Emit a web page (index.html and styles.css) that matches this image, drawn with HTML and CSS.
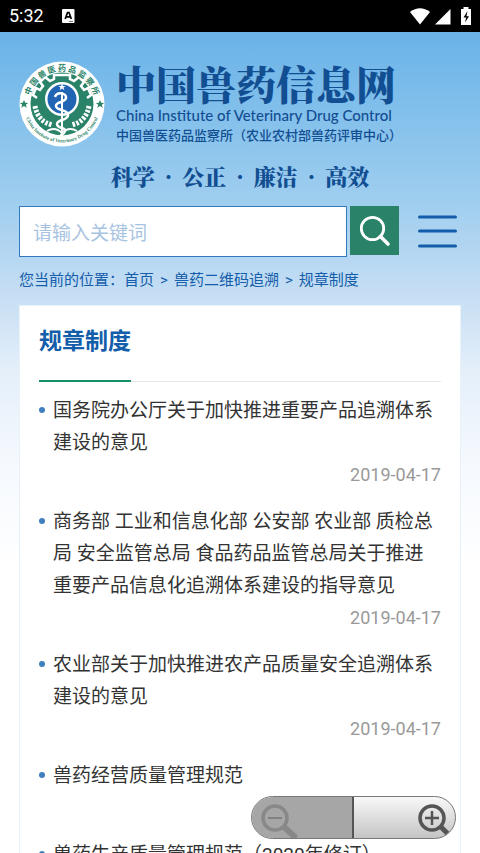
FILE: index.html
```html
<!DOCTYPE html>
<html lang="zh-CN">
<head>
<meta charset="utf-8">
<meta name="viewport" content="width=device-width, initial-scale=1">
<title>规章制度 - 中国兽药信息网</title>
<link rel="stylesheet" href="styles.css">
</head>
<body>
<div class="screen">
  <div class="status">
    <span class="clock">5:32</span>
    <svg class="status-app" width="13" height="14" viewBox="0 0 13 14" aria-hidden="true"><rect width="12.500" height="14" rx="1" fill="#fff"/><path d="M3.200 10 5.500 3.500h1.500L9.300 10M4.200 7.800h4" fill="none" stroke="#000" stroke-width="1.700"/><path d="M7 12.500h4" stroke="#777"/></svg>
    <div class="status-icons">
      <svg width="22" height="18" viewBox="0 0 22 18" aria-hidden="true"><path d="M1 5Q11-2.500 21 5L11 17.500Z" fill="#fff"/></svg>
      <svg width="16" height="18" viewBox="0 0 16 18" aria-hidden="true"><path d="M15.500 2v15.500H0Z" fill="#fff"/></svg>
      <svg class="battery" width="10" height="18" viewBox="0 0 10 18" aria-hidden="true"><path d="M2.500 2V0h5v2H10v16H0V2Z" fill="#fff"/><path d="M6.500 4 2.500 10.500h2.700L4 15.500l4-6.300H5.500Z" fill="#000"/></svg>
    </div>
  </div>

  <div class="site">
    <header class="header">
      <a class="brand" href="#">
        <svg class="seal" width="86" height="88" viewBox="0 0 86 88" aria-hidden="true">
          <defs>
            <path id="arc-top" d="M10 44a33 33 0 0 1 66 0" />
            <path id="arc-bottom" d="M4.500 44a38.500 38.500 0 0 0 77 0" />
          </defs>
          <circle cx="43" cy="44" r="42.500" fill="#fff"/>
          <circle cx="43" cy="44" r="31.500" fill="#2a8368"/>
          <path d="m18 38-4-3 3-7 4 2 3-4-3-4 5-5 5 4 4-2v-4h16v4l4 2 5-4 5 5-3 4 3 4 4-2 3 7-4 3" fill="none" stroke="#fff" stroke-width="2.500"/>
          <circle cx="43" cy="39" r="17" fill="#fff"/>
          <circle cx="43" cy="39" r="14.500" fill="#2164b3"/>
          <path d="m43 23.500 1 2.500h2.700l-2.200 1.600.9 2.700-2.400-1.700-2.400 1.700.9-2.700-2.200-1.600H42Z" fill="#fff"/>
          <path d="M43 32v50" stroke="#fff" stroke-width="2"/>
          <path d="M36 37c2-6 12-4 11 1s-10 3-10 8 12 3 12 9-11 4-11 9 9 3 8 7-5 3-5 6" fill="none" stroke="#fff" stroke-width="2.500"/>
          <path d="M16 46c2 11 8 17 18 19M70 46c-2 11-8 17-18 19" fill="none" stroke="#fff" stroke-width="5" stroke-dasharray="2.500 1.500"/>
          <path d="M28 71q8-5 15 2 7-7 15-2" fill="none" stroke="#fff" stroke-width="2"/>
          <path d="m5 40 1.200 2.800 3 .1-2.400 1.900.9 2.900L5 46l-2.700 1.700.9-2.900-2.400-1.900 3-.1ZM81 40l1.200 2.800 3 .1-2.400 1.900.9 2.900L81 46l-2.700 1.700.9-2.900-2.400-1.900 3-.1Z" fill="#2a8368"/>
          <text class="seal-cn" text-anchor="middle"><textPath href="#arc-top" startOffset="50%">中 国 兽 医 药 品 监 察 所</textPath></text>
          <text class="seal-en" text-anchor="middle"><textPath href="#arc-bottom" startOffset="50%">China Institute of Veterinary Drug Control</textPath></text>
        </svg>
        <span class="brand-text">
          <span class="brand-name">中国兽药信息网</span>
          <span class="brand-en">China Institute of Veterinary Drug Control</span>
          <span class="brand-org">中国兽医药品监察所（农业农村部兽药评审中心）</span>
        </span>
      </a>
      <p class="motto"><span>科学</span><span>·</span><span>公正</span><span>·</span><span>廉洁</span><span>·</span><span>高效</span></p>
      <form class="search">
        <input class="search-box" type="text" placeholder="请输入关键词" aria-label="请输入关键词">
        <button class="search-button" type="button" aria-label="搜索">
          <svg width="32" height="32" viewBox="0 0 32 32" aria-hidden="true"><circle cx="13.500" cy="13.500" r="11.200" fill="none" stroke="#fff" stroke-width="2.800"/><path d="m21.500 21.500 7.500 7.500" stroke="#fff" stroke-width="3.600" stroke-linecap="round"/></svg>
        </button>
        <button class="menu-button" type="button" aria-label="菜单">
          <svg width="39" height="33" viewBox="0 0 39 33" aria-hidden="true"><path d="M1.500 2h36M1.500 16h36M1.500 31h36" stroke="#135daa" stroke-width="3" stroke-linecap="round"/></svg>
        </button>
      </form>
      <nav class="crumbs">您当前的位置：<a href="#">首页</a><span>&gt;</span><a href="#">兽药二维码追溯</a><span>&gt;</span><a href="#">规章制度</a></nav>
    </header>

    <main class="card">
      <div class="card-head"><h1>规章制度</h1></div>
      <ul class="list">
        <li><a href="#">国务院办公厅关于加快推进重要产品追溯体系建设的意见</a><time>2019-04-17</time></li>
        <li><a href="#">商务部 工业和信息化部 公安部 农业部 质检总局 安全监管总局 食品药品监管总局关于推进重要产品信息化追溯体系建设的指导意见</a><time>2019-04-17</time></li>
        <li><a href="#">农业部关于加快推进农产品质量安全追溯体系建设的意见</a><time>2019-04-17</time></li>
        <li><a href="#">兽药经营质量管理规范</a><time>2019-04-17</time></li>
        <li><a href="#">兽药生产质量管理规范（2020年修订）</a></li>
      </ul>
    </main>
  </div>

  <div class="zoom">
    <button class="zoom-out" type="button" disabled aria-label="缩小">
      <svg width="40" height="36" viewBox="0 0 40 36" aria-hidden="true"><circle cx="15" cy="15" r="12" fill="none" stroke="#888" stroke-width="3.500"/><path d="M8 15h14" stroke="#808080" stroke-width="2"/><path d="m24 24 12 11" stroke="#888" stroke-width="6"/></svg>
    </button>
    <button class="zoom-in" type="button" aria-label="放大">
      <svg width="36" height="36" viewBox="0 0 36 36" aria-hidden="true"><circle cx="15" cy="15" r="12" fill="none" stroke="#555" stroke-width="3.500"/><path d="M8 15h14M15 8v14" stroke="#555" stroke-width="2.500"/><path d="m23.500 23.500 8 8" stroke="#555" stroke-width="5"/></svg>
    </button>
  </div>
</div>
</body>
</html>
```
FILE: styles.css
```css
* { box-sizing: border-box; }

body {
  margin: 0;
  font-family: Roboto, "Noto Sans CJK SC", sans-serif;
  color: #333;
}

a { color: inherit; text-decoration: none; }

button { padding: 0; border: 0; background: none; }

svg { display: block; }

.screen {
  position: relative;
  height: 100vh;
  overflow: hidden;
  background: #fff;
}

.status {
  display: flex;
  align-items: center;
  height: 32px;
  padding: 0 9px;
  background: #000;
  color: #fff;
}

.clock { font-size: 18px; line-height: 32px; }
.status-app { margin-left: 18px; }
.status-icons { display: flex; gap: 4px; margin-left: auto; }
.battery { margin-left: 6px; }

.site {
  padding: 28px 19px 0;
  background: linear-gradient(#69b3e8 0, #9fceef 170px, #c9dff4 270px, #e4effa 340px, #f5f9fe 430px, #fff 540px);
}

.header { color: #135daa; }

.brand {
  display: flex;
  gap: 11px;
  color: #124e92;
}

.seal { flex: none; }
.seal-cn { font: 700 8px "Noto Sans CJK SC", sans-serif; fill: #2a8368; }
.seal-en { font: 700 5px "Liberation Serif", serif; fill: #2a8368; }

.brand-text {
  display: flex;
  flex-direction: column;
  font-family: "Noto Sans CJK SC", sans-serif;
  white-space: nowrap;
}

.brand-name {
  font: 900 40px/46px "Noto Serif CJK SC", "Noto Sans CJK SC", serif;
}

.brand-en { font-family: Lato, sans-serif; font-size: 15px; font-weight: 500; line-height: 18px; }
.brand-org { font-size: 13px; font-weight: 500; line-height: 22px; }

.motto {
  display: flex;
  justify-content: center;
  gap: 10px;
  margin: 13px 0 0;
  font: 900 22px/30px "Noto Serif CJK SC", "Noto Sans CJK SC", serif;
  color: #124e92;
}

.search {
  display: flex;
  align-items: flex-start;
  margin-top: 15px;
}

.search-box {
  flex: 1;
  min-width: 0;
  height: 51px;
  padding: 0 13px;
  border: 1px solid #3478bd;
  border-radius: 0;
  background: #fff;
  font: 19px "Noto Sans CJK SC", sans-serif;
  color: #333;
}

.search-box::placeholder { color: #a8c3e1; opacity: 1; }

.search-button {
  display: grid;
  place-items: center;
  width: 49px;
  height: 49px;
  margin-left: 3px;
  background: #2a8368;
}

.menu-button {
  display: grid;
  place-items: center;
  height: 51px;
  margin: 0 4px 0 19px;
}

.crumbs {
  padding: 8px 0 10px;
  font-size: 15px;
  line-height: 30px;
}

.crumbs span { margin: 0 6px; }

.card {
  padding: 0 19px;
  border: 1px solid #e7f2fa;
  background: #fff;
}

.card-head {
  display: flex;
  border-bottom: 1px solid #e3e8ee;
}

.card-head h1 {
  margin: 0 0 -1px;
  padding-bottom: 3px;
  border-bottom: 2px solid #159063;
  font-size: 23px;
  font-weight: 700;
  line-height: 71px;
  color: #135daa;
}

.list {
  margin: 0;
  padding: 13px 0 0;
  list-style: none;
  font-size: 19px;
  line-height: 32px;
}

.list li {
  display: flex;
  flex-wrap: wrap;
  padding: 0 0 15px 14px;
}

.list li::before {
  content: "";
  width: 6px;
  height: 6px;
  margin: 12px 8px 0 -14px;
  border-radius: 50%;
  background: #3f7fbd;
}

.list a { flex: 1; }

.list time {
  width: 100%;
  font-size: 18px;
  text-align: right;
  color: #999;
}

.zoom {
  position: absolute;
  right: 24px;
  bottom: 14px;
  display: flex;
  width: 205px;
  height: 43px;
  overflow: hidden;
  border: 1px solid #777;
  border-radius: 22px;
  background: linear-gradient(#f8f8f8, #c4c4c4);
}

.zoom button { display: flex; padding-top: 6px; }
.zoom .zoom-out { width: 50%; padding-left: 8px; border-right: 2px solid #555; background: #a6a6a6; }
.zoom .zoom-in { flex: 1; justify-content: flex-end; padding-right: 2px; }
```
